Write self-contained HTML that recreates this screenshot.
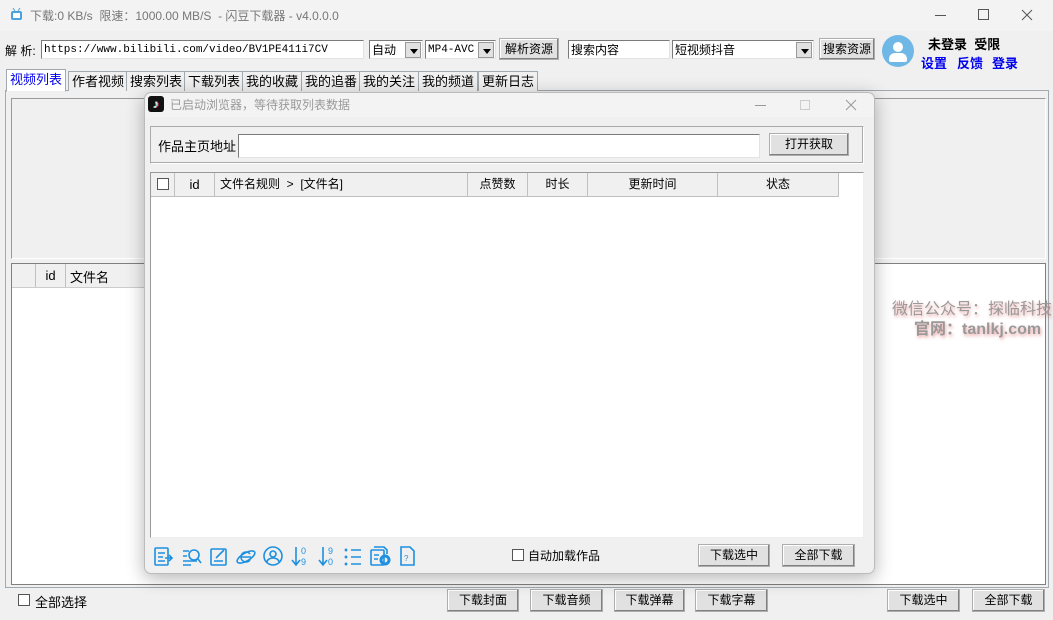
<!DOCTYPE html>
<html><head><meta charset="utf-8"><style>
*{box-sizing:border-box;margin:0;padding:0}
body{width:1053px;height:620px;overflow:hidden;background:#f0f0f0;font-family:"Liberation Sans","Noto Sans CJK SC",sans-serif;font-size:12px;color:#000;position:relative}
.a{position:absolute}
.btn{position:absolute;background:#e1e1e1;border:1px solid #adadad;box-shadow:inset -1px -1px 0 #808080,inset 1px 1px 0 #fff;text-align:center;font-size:12px;line-height:20px}
.inp{position:absolute;background:#fff;border:1px solid #7a7a7a;border-right-color:#e3e3e3;border-bottom-color:#e3e3e3;font-size:12px;line-height:18px;padding-left:2px;white-space:nowrap;overflow:hidden}
.dd{position:absolute;right:1px;top:1px;width:16px;height:16px;background:#e1e1e1;border:1px solid #999}
.dd:after{content:"";position:absolute;left:4px;top:6px;border:4px solid transparent;border-top:5px solid #000}
.tab{position:absolute;top:71px;height:20px;border:1px solid #a0a8b0;border-bottom:none;background:#f0f0f0;font-size:13px;line-height:19px;padding:0 3px}
.th{position:absolute;top:0;height:23px;border-right:1px solid #c0c0c0;text-align:center;line-height:23px;font-size:12px}
.cb{position:absolute;width:12px;height:12px;border:1px solid #555;background:#fff}
.lk{position:absolute;top:53px;font-weight:bold;font-size:13px;color:#0000ee}
</style></head><body>
<div class="a" style="left:0;top:0;width:1053px;height:31px;background:#f3f3f3"></div>
<svg class="a" style="left:10px;top:8px" width="13" height="13"><rect x="1" y="3" width="11" height="9" rx="2" fill="#4aa3df"/><rect x="3" y="5" width="7" height="5" fill="#fff"/><line x1="3" y1="0" x2="5" y2="3" stroke="#4aa3df"/><line x1="10" y1="0" x2="8" y2="3" stroke="#4aa3df"/></svg>
<div class="a" style="left:30px;top:7px;color:#777;font-size:12px">下载:0 KB/s&nbsp; 限速：1000.00 MB/S&nbsp; - 闪豆下载器 - v4.0.0.0</div>
<svg class="a" style="left:930px;top:6px" width="110" height="20" stroke="#555" stroke-width="1" fill="none">
<path d="M5 9.5h11"/><rect x="48.5" y="3.5" width="10" height="10"/><path d="M92 4l10 10M102 4l-10 10"/></svg>
<div class="a" style="left:5px;top:42px;font-size:12px">解 析:</div>
<div class="inp" style="left:41px;top:40px;width:323px;height:19px;font-family:'Liberation Mono',monospace;font-size:11px">https://www.bilibili.com/video/BV1PE411i7CV</div>
<div class="inp" style="left:369px;top:40px;width:54px;height:19px">自动<span class="dd"></span></div>
<div class="inp" style="left:425px;top:40px;width:71px;height:19px;font-family:'Liberation Mono',monospace;font-size:11px">MP4-AVC<span class="dd"></span></div>
<div class="btn" style="left:499px;top:38px;width:60px;height:22px">解析资源</div>
<div class="inp" style="left:568px;top:40px;width:102px;height:19px">搜索内容</div>
<div class="inp" style="left:672px;top:40px;width:142px;height:19px">短视频抖音<span class="dd"></span></div>
<div class="btn" style="left:819px;top:38px;width:56px;height:22px">搜索资源</div>
<div class="a" style="left:882px;top:35px;width:32px;height:32px;border-radius:50%;background:#6fb8e6;overflow:hidden">
<div class="a" style="left:11px;top:7px;width:10px;height:10px;border-radius:50%;background:#fff"></div>
<div class="a" style="left:7px;top:18px;width:18px;height:9px;border-radius:6px 6px 2px 2px;background:#fff"></div></div>
<div class="a" style="left:928px;top:34px;font-weight:bold;font-size:13px">未登录&nbsp; 受限</div>
<div class="lk" style="left:921px">设置</div><div class="lk" style="left:957px">反馈</div><div class="lk" style="left:992px">登录</div>
<div class="a" style="left:5px;top:90px;width:1044px;height:498px;border:1px solid #a0a8b0;background:#f0f0f0"></div>
<div class="tab" style="left:6px;top:69px;height:23px;background:#fff;color:#0000ee;border-bottom:1px solid #f0f0f0">视频列表</div>
<div class="tab" style="left:68px">作者视频</div>
<div class="tab" style="left:126px">搜索列表</div>
<div class="tab" style="left:184px">下载列表</div>
<div class="tab" style="left:242px">我的收藏</div>
<div class="tab" style="left:301px">我的追番</div>
<div class="tab" style="left:359px">我的关注</div>
<div class="tab" style="left:418px">我的频道</div>
<div class="tab" style="left:478px">更新日志</div>
<div class="a" style="left:11px;top:98px;width:1035px;height:161px;border:1px solid #999;border-right-color:#fff;border-bottom-color:#fff;background:#f0f0f0"></div>
<div class="a" style="left:11px;top:263px;width:1035px;height:322px;border:1px solid #808080;background:#fff"></div>
<div class="a" style="left:12px;top:264px;width:140px;height:24px;background:#f0f0f0;border-bottom:1px solid #ccc">
<div class="th" style="left:0;width:24px"></div><div class="th" style="left:24px;width:30px;font-size:13px">id</div><div class="a" style="left:58px;top:3px;font-size:13px">文件名</div></div>
<div class="a" style="left:892px;top:295px;font-size:16px;color:#999;text-shadow:1px 2px 3px rgba(220,80,80,.5)">微信公众号：探临科技</div>
<div class="a" style="left:914px;top:315px;font-size:16px;color:#999;font-weight:bold;text-shadow:1px 2px 3px rgba(220,80,80,.5)">官网：tanlkj.com</div>
<div class="cb" style="left:18px;top:594px"></div>
<div class="a" style="left:35px;top:592px;font-size:13px">全部选择</div>
<div class="btn" style="left:447px;top:589px;width:72px;height:23px">下载封面</div>
<div class="btn" style="left:530px;top:589px;width:73px;height:23px">下载音频</div>
<div class="btn" style="left:614px;top:589px;width:71px;height:23px">下载弹幕</div>
<div class="btn" style="left:695px;top:589px;width:73px;height:23px">下载字幕</div>
<div class="btn" style="left:887px;top:589px;width:73px;height:23px">下载选中</div>
<div class="btn" style="left:972px;top:589px;width:73px;height:23px">全部下载</div>
<div class="a" style="left:144px;top:92px;width:731px;height:482px;background:#f0f0f0;border:1px solid #bbb;border-radius:7px;box-shadow:0 4px 18px rgba(0,0,0,.3)">
<div class="a" style="left:0;top:0;width:729px;height:24px;background:#f3f3f3;border-radius:7px 7px 0 0"></div>
<div class="a" style="left:3px;top:3px;width:16px;height:16px;background:#111;border-radius:3px;color:#fff;font-size:12px;line-height:16px;text-align:center;font-weight:bold;text-shadow:-1px 0 #25f4ee,1px 0 #fe2c55">♪</div>
<div class="a" style="left:25px;top:3px;color:#999;font-size:12px">已启动浏览器，等待获取列表数据</div>
<svg class="a" style="left:605px;top:4px" width="110" height="16" stroke="#999" stroke-width="1" fill="none">
<path d="M5 8.5h11"/><rect x="50.5" y="3.5" width="9" height="9" stroke="#ccc"/><path d="M96 3l10 10M106 3l-10 10"/></svg>
<div class="a" style="left:5px;top:33px;width:714px;height:38px;border:1px solid #aaa;border-right-color:#fff;border-bottom-color:#fff;box-shadow:inset -1px -1px 0 #aaa"></div>
<div class="a" style="left:13px;top:43px;font-size:13px">作品主页地址</div>
<div class="inp" style="left:93px;top:41px;width:522px;height:24px"></div>
<div class="btn" style="left:624px;top:40px;width:80px;height:23px">打开获取</div>
<div class="a" style="left:5px;top:79px;width:714px;height:366px;background:#fff;border:1px solid #999;border-right-color:#eee;border-bottom-color:#eee"></div>
<div class="a" style="left:6px;top:80px;width:688px;height:24px;background:#f0f0f0;border-bottom:1px solid #c0c0c0">
<div class="th" style="left:0;width:24px"><span class="cb" style="left:6px;top:5px"></span></div>
<div class="th" style="left:24px;width:40px;font-size:13px">id</div>
<div class="th" style="left:64px;width:253px;text-align:left;padding-left:5px">文件名规则 &nbsp;&gt;&nbsp; [文件名]</div>
<div class="th" style="left:317px;width:60px">点赞数</div>
<div class="th" style="left:377px;width:60px">时长</div>
<div class="th" style="left:437px;width:130px">更新时间</div>
<div class="th" style="left:567px;width:121px">状态</div></div>
<svg class="a" style="left:8px;top:452px" width="270" height="22" fill="none" stroke="#1e90e0" stroke-width="1.6">
<rect x="2" y="3" width="13" height="17" rx="1"/><path d="M5 8h7M5 12h5M5 16h7M12 13h7M16 10l3 3-3 3"/>
<path d="M30 6h6M30 11h4M30 16h14M30 20h8"/><circle cx="41" cy="10" r="5"/><path d="M45 14l3 4"/>
<rect x="58" y="4" width="15" height="16" rx="1"/><path d="M61 16h9M63 13l8-8"/>
<ellipse cx="93" cy="12" rx="10" ry="4" transform="rotate(-30 93 12)"/><path d="M98 12h-10a5 5 0 0 1 9-3M88 12a5 5 0 0 0 9 3"/>
<circle cx="120" cy="11" r="9"/><circle cx="120" cy="9" r="3"/><path d="M114 17a6 4 0 0 1 12 0"/>
<path d="M143 2v17M139 15l4 5 4-5"/><text x="148" y="9" font-size="9" fill="#1e90e0" stroke="none" font-family="Liberation Sans">0</text><text x="148" y="20" font-size="9" fill="#1e90e0" stroke="none" font-family="Liberation Sans">9</text>
<path d="M170 2v17M166 15l4 5 4-5"/><text x="175" y="9" font-size="9" fill="#1e90e0" stroke="none" font-family="Liberation Sans">9</text><text x="175" y="20" font-size="9" fill="#1e90e0" stroke="none" font-family="Liberation Sans">0</text>
<path d="M192 4l2 2M194 4l-2 2M192 11l2 2M194 11l-2 2M192 18l2 2M194 18l-2 2M198 5h10M198 12h10M198 19h10"/>
<rect x="218" y="5" width="13" height="15" rx="1"/><path d="M221 2h10l3 3v4M221 10h5M221 14h4"/><circle cx="232" cy="15" r="4" stroke-width="3"/>
<path d="M248 2h9l4 4v14h-13z"/><text x="251" y="16" font-size="8" fill="#1e90e0" stroke="none" font-family="Liberation Sans">?</text>
</svg>
<div class="cb" style="left:367px;top:456px"></div>
<div class="a" style="left:383px;top:454px;font-size:12px">自动加载作品</div>
<div class="btn" style="left:553px;top:451px;width:72px;height:23px">下载选中</div>
<div class="btn" style="left:637px;top:451px;width:73px;height:23px">全部下载</div>
</div>
</body></html>
